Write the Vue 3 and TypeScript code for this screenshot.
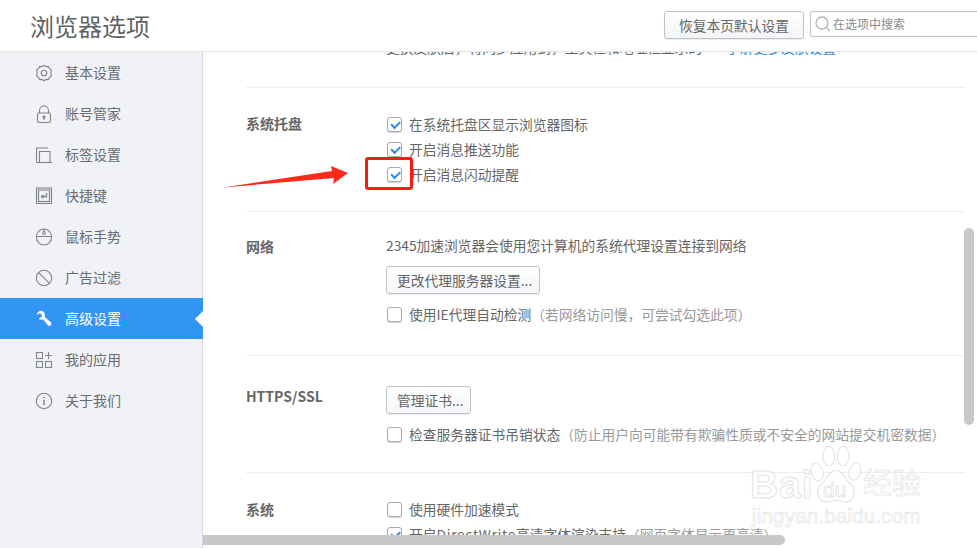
<script setup lang="ts">
interface NavItem { label: string; icon: string; active?: boolean }
const nav: NavItem[] = [
  { label: '基本设置', icon: 'gear' },
  { label: '账号管家', icon: 'lock' },
  { label: '标签设置', icon: 'tab' },
  { label: '快捷键', icon: 'key' },
  { label: '鼠标手势', icon: 'mouse' },
  { label: '广告过滤', icon: 'ban' },
  { label: '高级设置', icon: 'wrench', active: true },
  { label: '我的应用', icon: 'apps' },
  { label: '关于我们', icon: 'info' },
]
</script>

<template>
  <div class="page">
    <header class="top">
      <h1 class="title">浏览器选项</h1>
      <div class="top-actions">
        <button class="btn reset">恢复本页默认设置</button>
        <div class="search">
          <svg width="18" height="18" viewBox="0 0 18 18" fill="none" stroke="#b4b4b4" stroke-width="1.3">
            <circle cx="8" cy="8" r="6" />
            <path d="M12.4 12.4 16 16" />
          </svg>
          <span>在选项中搜索</span>
        </div>
      </div>
    </header>
    <div class="body">
      <nav class="side">
        <a v-for="n in nav" :key="n.label" class="item" :class="{ active: n.active }">
          <svg class="ico" width="18" height="18" viewBox="0 0 18 18" fill="none" stroke="#80838a" stroke-width="1.1">
            <template v-if="n.icon === 'gear'">
              <path d="M9 1.2 11 2.6 13.4 2.4 14.4 4.6 16.4 6 15.8 9 16.4 12 14.4 13.4 13.4 15.6 11 15.4 9 16.8 7 15.4 4.6 15.6 3.6 13.4 1.6 12 2.2 9 1.6 6 3.6 4.6 4.6 2.4 7 2.6Z" />
              <circle cx="9" cy="9" r="2.8" />
            </template>
            <template v-else-if="n.icon === 'lock'">
              <rect x="2.5" y="8" width="13" height="9.5" rx="1.5" />
              <path d="M4.5 8V5.5a4.5 4.5 0 0 1 9 0V8" />
              <circle cx="9" cy="12" r="1" fill="#80838a" />
              <path d="M9 12v3" />
            </template>
            <template v-else-if="n.icon === 'tab'">
              <path d="M1.5 15.5V2H13" />
              <path d="M4.5 16.5V5.5H15V16.5" />
              <path d="M1 16.5H17" />
            </template>
            <template v-else-if="n.icon === 'key'">
              <rect x="1.5" y="1" width="15" height="15.5" />
              <rect x="3.5" y="3" width="11" height="11.5" />
              <path d="M11.5 6v3.5H6.5M8.3 7.6 6.4 9.500l1.900 1.900" stroke-width="1.3" />
            </template>
            <template v-else-if="n.icon === 'mouse'">
              <rect x="1.5" y="1" width="15" height="16" rx="7.5" />
              <path d="M1.5 8.500h15M9 1v3" />
              <rect x="7.800" y="3.500" width="2.400" height="3" rx="1.200" />
            </template>
            <template v-else-if="n.icon === 'ban'">
              <circle cx="9" cy="9" r="7.700" />
              <path d="M3.600 3.600 14.400 14.400" />
            </template>
            <template v-else-if="n.icon === 'wrench'">
              <path d="M7.500 1C5 .3 2 2 1.500 5L4.500 3.200 6.800 4.600 6.500 7 3.600 8.800C5 10 6.600 10 8 9.300L13 15.500C14.500 17 17.500 14.500 16 12.500L9.800 7C10.300 4.500 9.500 2 7.500 1Z" fill="#fff" stroke="none" />
            </template>
            <template v-else-if="n.icon === 'apps'">
              <rect x="1.500" y="1.500" width="6" height="6" />
              <rect x="1.500" y="10.500" width="6" height="6" />
              <rect x="10.500" y="10.500" width="6" height="6" />
              <path d="M13.500 1v7M10 4.500h7" />
            </template>
            <template v-else>
              <circle cx="9" cy="9" r="7.700" />
              <circle cx="9" cy="5.300" r=".9" fill="#80838a" stroke="none" />
              <path d="M9 7.800v5.500" stroke-width="1.500" />
            </template>
          </svg>
          <span class="item-text">{{ n.label }}</span>
        </a>
      </nav>
      <main class="main">
        <div class="viewport">
          <div class="scroll">
            <section class="sec first">
              <div class="opts cut">
                <div class="row">
                  <span>更换皮肤后，将同步应用到，工具栏和地址栏显示的</span>
                  <span class="link">了解更多皮肤设置</span>
                </div>
              </div>
            </section>
            <section class="sec tray">
              <h2 class="label">系统托盘</h2>
              <div class="opts">
                <label class="row"><i class="cb on" />在系统托盘区显示浏览器图标</label>
                <label class="row"><i class="cb on" />开启消息推送功能</label>
                <label class="row"><i class="cb on" />开启消息闪动提醒</label>
              </div>
            </section>
            <section class="sec net">
              <h2 class="label">网络</h2>
              <div class="opts">
                <div class="row">2345加速浏览器会使用您计算机的系统代理设置连接到网络</div>
                <button class="btn w-proxy">更改代理服务器设置...</button>
                <label class="row after-btn"><i class="cb" />使用IE代理自动检测<em>（若网络访问慢，可尝试勾选此项）</em></label>
              </div>
            </section>
            <section class="sec ssl">
              <h2 class="label">HTTPS/SSL</h2>
              <div class="opts">
                <button class="btn w-cert">管理证书...</button>
                <label class="row after-btn"><i class="cb" />检查服务器证书吊销状态<em>（防止用户向可能带有欺骗性质或不安全的网站提交机密数据）</em></label>
              </div>
            </section>
            <section class="sec sys">
              <h2 class="label">系统</h2>
              <div class="opts">
                <label class="row"><i class="cb" />使用硬件加速模式</label>
                <label class="row"><i class="cb on" /><span>开启<span class="dw">DirectWrite</span>高清字体渲染支持<em>（网页字体显示更高清）</em></span></label>
              </div>
            </section>
          </div>
        </div>
        <div class="vbar" />
        <div class="hbar" />
      </main>
    </div>

    <div class="mark-box" />
    <svg class="arrow" width="130" height="24" viewBox="0 0 130 24">
      <path d="M0 21.500 109 5 108 0 125 7 110 18 111 12Z" fill="#fb2a1b" />
    </svg>

    <div class="wm">
      <svg class="paw" width="52" height="60" viewBox="0 0 58 66" fill="rgba(255,255,255,.75)" stroke="#e4e4e4" stroke-width="1.3">
        <ellipse cx="8" cy="30" rx="6.500" ry="10" transform="rotate(-15 8 30)" />
        <ellipse cx="21" cy="12" rx="6.500" ry="11" />
        <ellipse cx="37" cy="12" rx="6.500" ry="11" />
        <ellipse cx="50" cy="29" rx="6.500" ry="10" transform="rotate(15 50 29)" />
        <path d="M29 28C21 28 20 37 13 43 5 49 9 64 19 63 24 62.500 26 61 29 61 32 61 34 62.500 39 63 49 64 53 49 45 43 38 37 37 28 29 28Z" />
      </svg>
      <span class="bai">Bai</span>
      <span class="du">du</span>
      <span class="jy">经验</span>
      <span class="url">jingyan.baidu.com</span>
    </div>
  </div>
</template>

<style>
html, body { margin: 0; background: #fff; overflow: hidden; }
</style>

<style scoped>
.page {
  position: relative;
  width: 977px;
  height: 548px;
  overflow: hidden;
  font-family: "Noto Sans CJK SC", "Liberation Sans", sans-serif;
  font-size: 13.75px;
  color: #666;
  display: flex;
  flex-direction: column;
}
.top {
  height: 51px;
  flex: none;
  display: flex;
  align-items: center;
  justify-content: space-between;
  border-bottom: 1px solid #e6e6e6;
  box-shadow: 0 1px 2px rgba(0, 0, 0, .04);
  position: relative;
  z-index: 2;
  background: #fff;
}
.title {
  margin: 0 0 0 30px;
  font-size: 24px;
  font-weight: 400;
  color: #5f6265;
  line-height: 52px;
}
.top-actions {
  display: flex;
  align-items: flex-start;
  gap: 6px;
  margin-top: -1px;
}
.btn {
  display: block;
  height: 28px;
  padding: 0 0 0 10px;
  font: inherit;
  line-height: 25px;
  color: #666;
  text-align: left;
  border: 1px solid #c0c2c5;
  border-radius: 3px;
  background: linear-gradient(#fff, #f3f5f8);
  box-shadow: 0 1px 1px rgba(0, 0, 0, .08);
  white-space: nowrap;
}
.reset { width: 140px; padding-left: 14px; }
.w-proxy { width: 154px; }
.w-cert { width: 85px; }
.search {
  width: 163px;
  height: 24px;
  border: 1px solid #c4c4c4;
  border-right: 0;
  border-radius: 3px 0 0 3px;
  display: flex;
  align-items: center;
  gap: 1px;
  padding-left: 3px;
  font-size: 12px;
  line-height: 20px;
  color: #8a8a8a;
}
.body {
  flex: 1;
  display: flex;
  min-height: 0;
}
.side {
  width: 202px;
  flex: none;
  background: #f0f2f6;
  border-right: 1px solid #d9dbe0;
}
.item {
  position: relative;
  height: 41px;
  display: flex;
  align-items: center;
  padding-left: 35px;
  gap: 12px;
  color: #6a6c70;
  font-size: 14px;
}
.item-text { margin-top: -2px; }
.ico { flex: none; margin-top: 1px; }
.item.active {
  background: #3196f3;
  color: #fff;
  margin-right: -1px;
}
.item.active::after {
  content: "";
  position: absolute;
  right: 0;
  top: 50%;
  margin-top: -8px;
  border: 8px solid transparent;
  border-left: 0;
  border-right-color: #fff;
}
.main {
  position: relative;
  flex: 1;
  min-width: 0;
  display: flex;
  flex-direction: column;
}
.viewport {
  flex: 1;
  min-height: 0;
  overflow: hidden;
}
.scroll {
  margin-top: -52px;
  padding: 0 13px 0 43px;
  white-space: nowrap;
}
.sec {
  display: grid;
  grid-template-columns: 140px 1fr;
  border-bottom: 1px solid #eceded;
}
.sec:last-child { border-bottom: 0; }
.first { height: 87px; align-items: start; }
.cut { grid-column: 2; padding-top: 34px; }
.tray { padding: 23px 0 25px; }
.net { padding: 20px 0 29px; }
.ssl { padding: 30px 0 26px; }
.sys { padding: 23px 0 0; }
.label {
  margin: 0;
  font-size: 14px;
  font-weight: 700;
  color: #666;
  line-height: 25px;
}
.tray .label { margin-top: 0; }
.net .label { margin-top: 2px; }
.ssl .label { margin-top: -2px; }
.sys .label { margin-top: 1px; }
.row {
  display: flex;
  align-items: center;
  height: 25px;
}
.link { color: #2f86dc; margin-left: 24px; }
.net .row:first-child { margin-bottom: 9px; }
.after-btn { margin-top: 7px; }
.dw { letter-spacing: .7px; }
.cb {
  box-sizing: border-box;
  width: 15px;
  height: 15px;
  margin: 2px 7px 0 1px;
  flex: none;
  border: 1px solid #a9abae;
  border-radius: 3px;
  background: #fff;
  box-shadow: 0 1px 1px rgba(0, 0, 0, .18);
  position: relative;
}
.cb.on::after {
  content: "";
  position: absolute;
  left: 3px;
  top: 2.5px;
  width: 7px;
  height: 3.5px;
  border-left: 2px solid #2c8cf0;
  border-bottom: 2px solid #2c8cf0;
  transform: rotate(-45deg);
}
em { font-style: normal; color: #999; }
.vbar {
  position: absolute;
  left: 761px;
  top: 176px;
  width: 10px;
  height: 197px;
  background: #c8c8c8;
  border-radius: 5px;
}
.hbar {
  flex: none;
  width: 582px;
  height: 10px;
  margin-bottom: 3px;
  background: #c8c8c8;
  border-radius: 0 5px 5px 0;
}
.mark-box {
  position: absolute;
  left: 365px;
  top: 157px;
  width: 42px;
  height: 27px;
  border: 3px solid #fb1a12;
  border-radius: 3px;
}
.arrow {
  position: absolute;
  left: 223px;
  top: 166px;
}
.wm {
  position: absolute;
  left: 750px;
  top: 440px;
  width: 215px;
  height: 100px;
  pointer-events: none;
}
.paw { position: absolute; left: 60px; top: 5px; }
.bai, .du, .jy, .url {
  position: absolute;
  color: rgba(255, 255, 255, .75);
  -webkit-text-stroke: 1px #e4e4e4;
  font-family: "Liberation Sans", sans-serif;
  line-height: 1;
}
.bai { left: 0; top: 25px; font-size: 39px; letter-spacing: 1px; font-weight: 700; }
.du { left: 73px; top: 39px; font-size: 21px; -webkit-text-stroke-width: .8px; }
.jy { left: 113px; top: 27px; font-size: 29px; font-family: "Noto Sans CJK SC", sans-serif; -webkit-text-stroke-width: .7px; }
.url { left: 2px; top: 66px; font-size: 20.5px; letter-spacing: .2px; -webkit-text-stroke-width: .7px; }
</style>
